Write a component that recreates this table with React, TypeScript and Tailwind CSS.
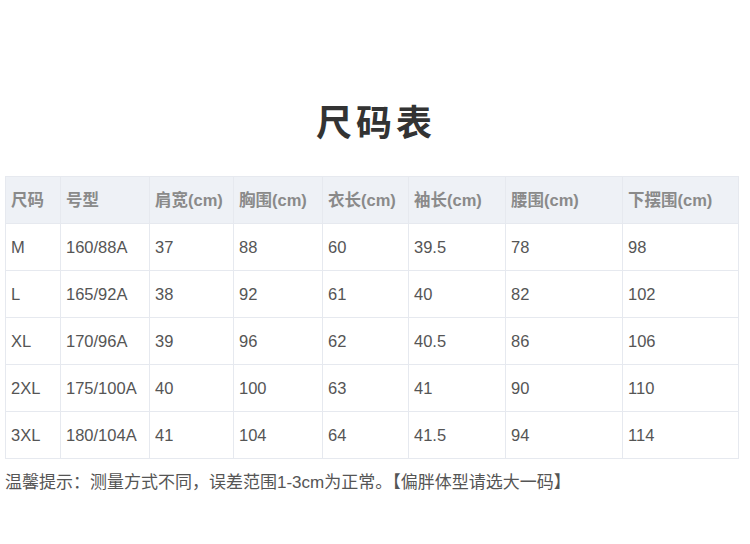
import React from 'react';

const font = { fontFamily: '"Liberation Sans", "Noto Sans CJK SC", sans-serif' };

const headers = ['尺码', '号型', '肩宽(cm)', '胸围(cm)', '衣长(cm)', '袖长(cm)', '腰围(cm)', '下摆围(cm)'];
const widths = ['w-[55px]', 'w-[89px]', 'w-[84px]', 'w-[89px]', 'w-[86px]', 'w-[97px]', 'w-[117px]', 'w-[116px]'];

const rows = [
  ['M', '160/88A', '37', '88', '60', '39.5', '78', '98'],
  ['L', '165/92A', '38', '92', '61', '40', '82', '102'],
  ['XL', '170/96A', '39', '96', '62', '40.5', '86', '106'],
  ['2XL', '175/100A', '40', '100', '63', '41', '90', '110'],
  ['3XL', '180/104A', '41', '104', '64', '41.5', '94', '114'],
];

export default function App() {
  return (
    <div className="w-[750px] h-[544px] bg-white overflow-hidden" style={font}>
      <div className="pt-[103px] flex justify-center">
        <h1 className="text-[36px] leading-[42px] font-bold tracking-[4px] text-[#333] pl-[2px]">尺码表</h1>
      </div>

      <div className="pl-[5px] pt-[31px]">
        <table className="border-collapse table-fixed w-[733px] text-[16.5px]">
          <thead>
            <tr className="bg-[#eef1f6] h-[47px]">
              {headers.map((h, i) => (
                <th
                  key={h}
                  className={`${widths[i]} border border-[#e6e9ef] px-[5px] text-left font-bold text-[#8a8a8a]`}
                >
                  {h}
                </th>
              ))}
            </tr>
          </thead>
          <tbody>
            {rows.map((r) => (
              <tr key={r[0]} className="h-[47px]">
                {r.map((c, i) => (
                  <td key={i} className="border border-[#e6e9ef] px-[5px] text-[#555] whitespace-nowrap">
                    {c}
                  </td>
                ))}
              </tr>
            ))}
          </tbody>
        </table>
      </div>

      <p className="pl-[5px] pt-[12px] text-[17px] leading-[24px] text-[#555]">
        温馨提示：测量方式不同，误差范围1-3cm为正常。【偏胖体型请选大一码】
      </p>
    </div>
  );
}
